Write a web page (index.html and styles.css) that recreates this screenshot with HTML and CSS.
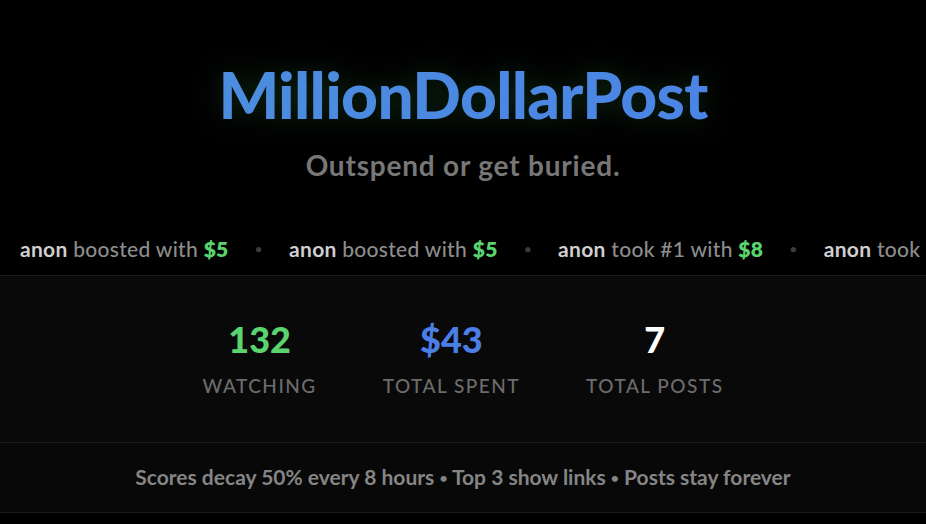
FILE: index.html
```html
<!DOCTYPE html>
<html lang="en">
<head>
<meta charset="utf-8">
<title>MillionDollarPost</title>
<link rel="stylesheet" href="styles.css">
</head>
<body>
<header class="hero">
  <h1 class="brand">MillionDollarPost</h1>
  <p class="tagline">Outspend or get buried.</p>
</header>

<div class="ticker">
  <div class="ticker-track">
    <span class="event"><b class="who">anon</b> boosted with <b class="amt">$5</b></span>
    <span class="sep">•</span>
    <span class="event"><b class="who">anon</b> boosted with <b class="amt">$5</b></span>
    <span class="sep">•</span>
    <span class="event"><b class="who">anon</b> took #1 with <b class="amt">$8</b></span>
    <span class="sep">•</span>
    <span class="event"><b class="who">anon</b> took #1 with <b class="amt">$8</b></span>
  </div>
</div>

<section class="stats">
  <div class="stat">
    <div class="stat-value green">132</div>
    <div class="stat-label">WATCHING</div>
  </div>
  <div class="stat">
    <div class="stat-value blue">$43</div>
    <div class="stat-label">TOTAL SPENT</div>
  </div>
  <div class="stat">
    <div class="stat-value white">7</div>
    <div class="stat-label">TOTAL POSTS</div>
  </div>
</section>

<section class="rules">
  <p>Scores decay 50% every 8 hours <span class="dot">•</span> Top 3 show links <span class="dot">•</span> Posts stay forever</p>
</section>
</body>
</html>
```

FILE: styles.css
```css
* { box-sizing: border-box; }

html, body {
  margin: 0;
  padding: 0;
  background: #000;
  color: #fff;
  font-family: "Lato", "Noto Sans", sans-serif;
}

.hero {
  padding-top: 56px;
  text-align: center;
}

.brand {
  margin: 0;
  font-size: 64px;
  line-height: 77px;
  font-weight: 900;
  letter-spacing: -0.7px;
  background: linear-gradient(90deg, #4c91db, #4a80e9);
  -webkit-background-clip: text;
  background-clip: text;
  color: transparent;
  filter: drop-shadow(0 0 14px rgba(60, 170, 80, 0.25));
}

.tagline {
  margin: 15px 0 0;
  font-size: 28px;
  line-height: 34px;
  font-weight: 700;
  letter-spacing: 0.8px;
  color: #777;
}

.ticker {
  margin-top: 41px;
  overflow: hidden;
  border-bottom: 1px solid #1a1a1a;
}

.ticker-track {
  display: flex;
  align-items: center;
  gap: 26px;
  padding: 14px 0 14px 20px;
  white-space: nowrap;
  font-size: 21px;
  line-height: 24px;
  letter-spacing: 0.3px;
  color: #8d8d8d;
  font-weight: 500;
}

.event .who {
  color: #cfcfcf;
  font-weight: 700;
}

.event .amt {
  color: #5ad36f;
  font-weight: 800;
}

.sep {
  color: #3c3c3c;
  font-size: 14px;
}

.stats {
  display: flex;
  justify-content: center;
  gap: 66px;
  padding: 42px 0 45px;
  background: #090909;
  border-bottom: 1px solid #1a1a1a;
}

.stat {
  text-align: center;
}

.stat-value {
  font-size: 36px;
  line-height: 43px;
  font-weight: 900;
}

.stat-value.green { color: #5bd46f; }
.stat-value.blue { color: #4b7fe6; }
.stat-value.white { color: #fff; }

.stat-label {
  margin-top: 13px;
  font-size: 19px;
  line-height: 23px;
  letter-spacing: 1.5px;
  color: #6c6c6c;
  font-weight: 500;
}

.rules {
  background: #080808;
  border-bottom: 1px solid #1a1a1a;
  padding: 22px 0;
  text-align: center;
}

.rules p {
  margin: 0;
  font-size: 21px;
  line-height: 24px;
  font-weight: 700;
  color: #858585;
}

.rules .dot {
  font-size: 14px;
  vertical-align: 2px;
}
```
